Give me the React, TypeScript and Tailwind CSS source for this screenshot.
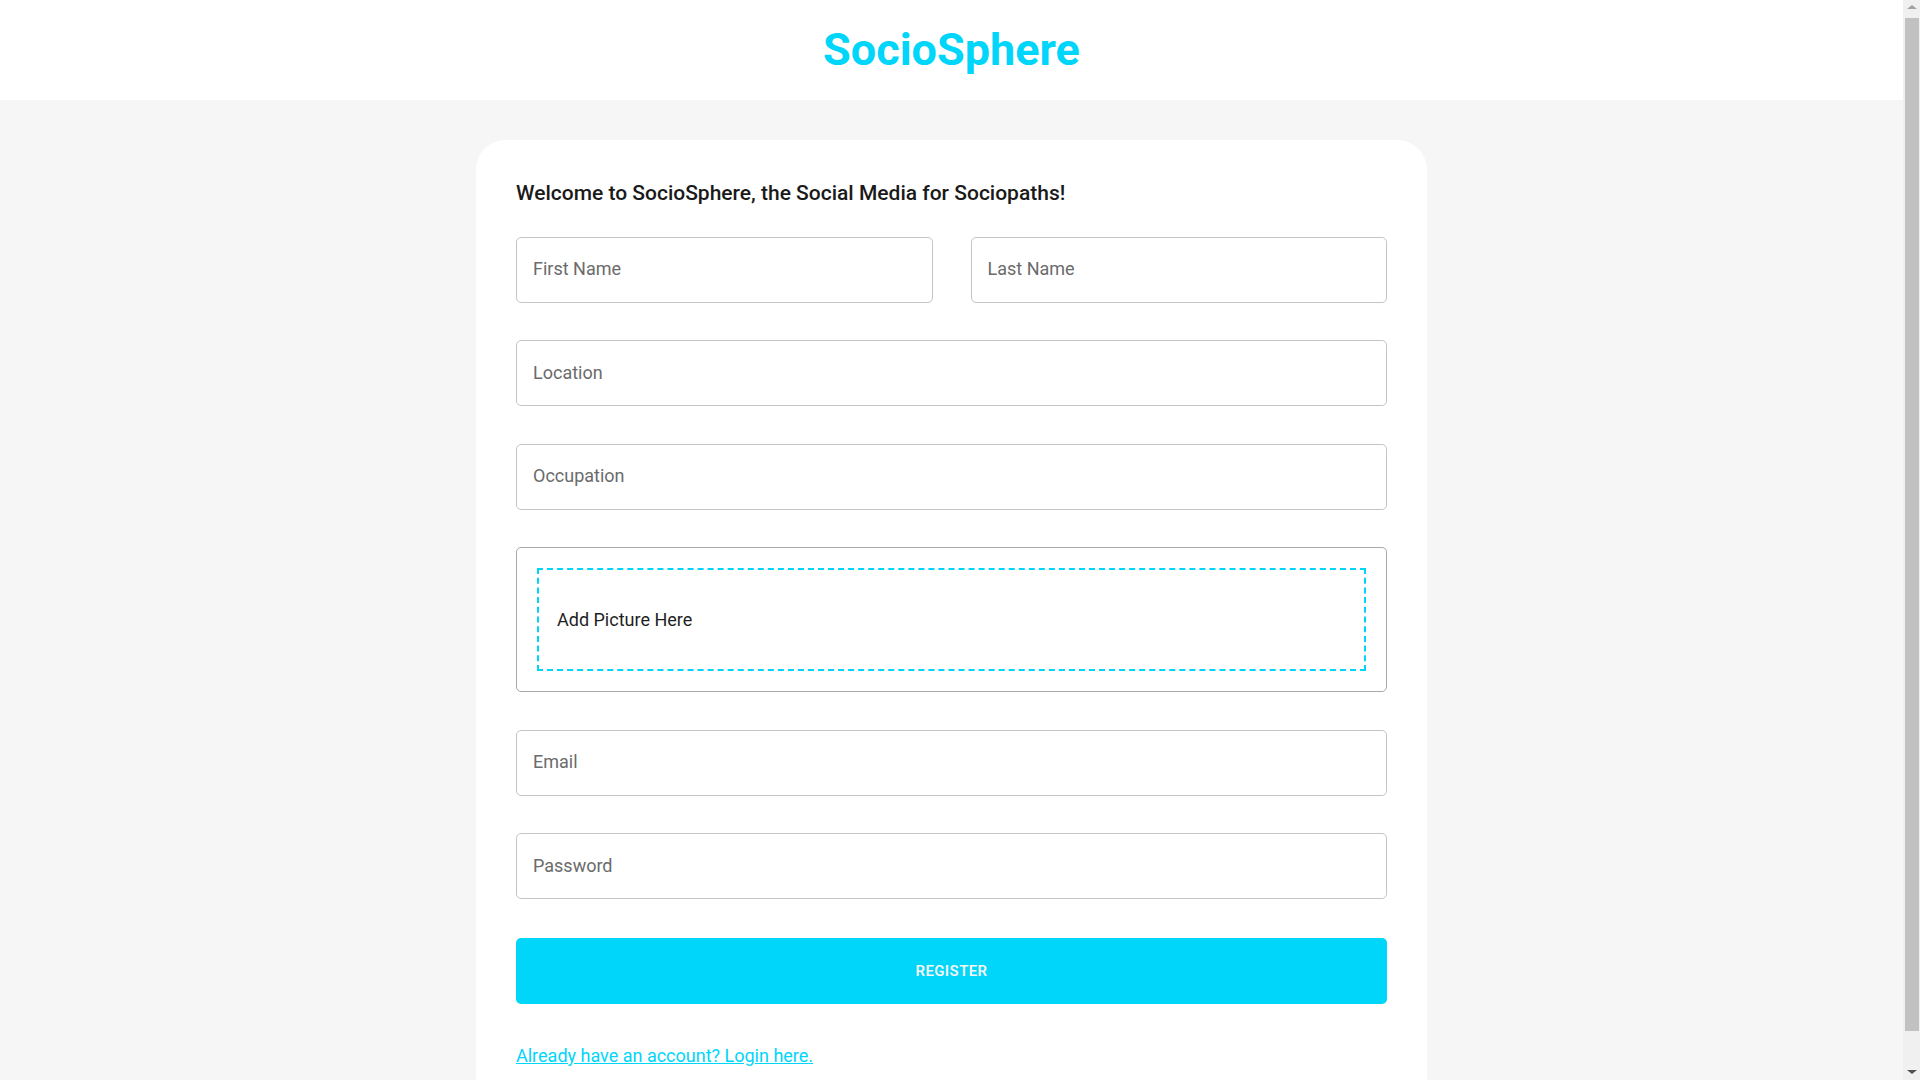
import React from 'react';

const fields = ['Location', 'Occupation'];

function Field({ label }: { label: string }) {
  return (
    <input
      placeholder={label}
      className="h-[66px] w-full rounded-[5px] border border-[#c4c4c4] bg-white px-[16px] pb-[2px] text-[18px] text-[#333] placeholder:text-[#6b6b6b] outline-none"
    />
  );
}

export default function App() {
  return (
    <div className="flex h-screen bg-[#f6f6f6] font-['Roboto',sans-serif]">
      <div className="min-w-0 flex-1 overflow-hidden">
        {/* Top bar */}
        <header className="flex h-[100px] items-center justify-center bg-white">
          <h1 className="mb-[2px] text-[45px] font-bold leading-none text-[#00d5fa]">SocioSphere</h1>
        </header>

        {/* Register card */}
        <main className="mx-auto mb-[32px] mt-[40px] w-[951px] rounded-[30px] bg-white px-[40px] pb-[40px] pt-[38px]">
          <h2 className="mb-[27px] text-[21px] font-medium text-[#1a1a1a]">
            Welcome to SocioSphere, the Social Media for Sociopaths!
          </h2>

          <div className="flex flex-col gap-[37.5px]">
            <div className="grid grid-cols-2 gap-[38px]">
              <Field label="First Name" />
              <Field label="Last Name" />
            </div>

            {fields.map((f) => (
              <Field key={f} label={f} />
            ))}

            <div className="rounded-[5px] border border-[#a8a8a8] p-[20px]">
              <div className="flex h-[103px] items-center border-2 border-dashed border-[#00d5fa] px-[18px]">
                <p className="text-[18px] text-[#1f1f1f]">Add Picture Here</p>
              </div>
            </div>

            <Field label="Email" />
            <Field label="Password" />
          </div>

          <button className="mt-[39px] flex h-[66px] w-full items-center justify-center rounded-[5px] bg-[#00d5fa] text-[15px] font-semibold tracking-[0.4px] text-[#f5f5f5]">
            REGISTER
          </button>

          <a href="#" className="mt-[38px] inline-block text-[18px] text-[#00d5fa] underline">
            Already have an account? Login here.
          </a>
        </main>
      </div>

      {/* scrollbar strip */}
      <div className="flex w-[17px] shrink-0 flex-col items-center bg-[#f0f0f0]">
        <div className="mt-[5px] h-0 w-0 border-x-[5px] border-b-[4px] border-x-transparent border-b-[#a3a3a3]" />
        <div className="mt-[9px] h-[1013px] w-[14px] bg-[#c1c1c1]" />
        <div className="flex-1" />
        <div className="mb-[6px] h-0 w-0 border-x-[5px] border-t-[4px] border-x-transparent border-t-[#505050]" />
      </div>
    </div>
  );
}
